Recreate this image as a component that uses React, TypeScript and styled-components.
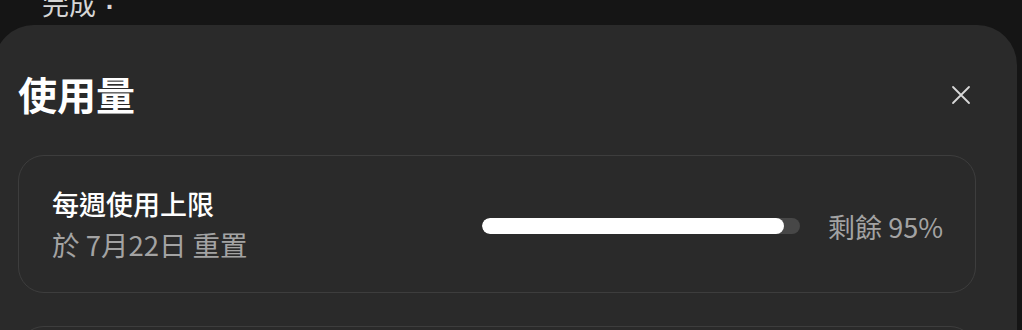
import React from "react";
import styled, { createGlobalStyle } from "styled-components";

const Global = createGlobalStyle`
  html, body { margin: 0; padding: 0; background: #151515; }
  body { font-family: "Noto Sans CJK TC", "Noto Sans", sans-serif; overflow: hidden; }
`;

const Page = styled.div`
  width: 1022px;
  height: 330px;
  overflow: hidden;
  background: #151515;
`;

const TopStrip = styled.div`
  height: 25px;
  overflow: hidden;
  padding-left: 42px;
`;

const TopText = styled.div`
  font-size: 27px;
  line-height: 27px;
  margin-top: -10px;
  color: #d6d6d6;
`;

const Stop = styled.span`
  display: inline-block;
  width: 27px;
  text-align: center;
  font-family: "Liberation Sans", sans-serif;
  font-weight: 700;
  transform: translateY(-6px);
`;

const Panel = styled.div`
  margin-left: -6px;
  width: 1023px;
  height: 320px;
  box-sizing: border-box;
  background: #2a2a2a;
  border-radius: 40px 40px 0 0;
  padding: 40px 46px 0 24px;
`;

const Header = styled.div`
  display: flex;
  align-items: center;
  justify-content: space-between;
  height: 60px;
`;

const Title = styled.h1`
  margin: 0;
  font-size: 39px;
  font-weight: 700;
  color: #ffffff;
  line-height: 60px;
  margin-top: -4px;
`;

const Close = styled.button`
  border: 0;
  background: transparent;
  padding: 0;
  width: 20px;
  height: 20px;
  display: flex;
  color: #d8d8d8;
`;

const Card = styled.div<{ $peek?: boolean }>`
  margin-top: ${(p) => (p.$peek ? "33px" : "30px")};
  width: 958px;
  height: 138px;
  box-sizing: border-box;
  border: 1.5px solid #3d3d3d;
  border-radius: 26px;
  display: flex;
  align-items: center;
  padding: 0 32px 0 33px;
`;

const Info = styled.div`
  flex: 1;
  display: flex;
  flex-direction: column;
  gap: 2px;
`;

const Label = styled.div`
  font-size: 27px;
  font-weight: 500;
  color: #ffffff;
  line-height: 38px;
`;

const Sub = styled.div`
  font-size: 27.5px;
  color: #a3a3a3;
  line-height: 38px;
`;

const Track = styled.div`
  width: 318px;
  height: 16px;
  border-radius: 8px;
  background: #474747;
  overflow: hidden;
  margin-right: 28px;
  margin-top: 4px;
`;

const Fill = styled.div`
  height: 100%;
  background: #ffffff;
  border-radius: 8px;
`;

const Remain = styled.div`
  font-size: 27px;
  color: #a3a3a3;
  white-space: nowrap;
  margin-top: 4px;
`;

export default function App() {
  const pct = 95;
  return (
    <Page lang="zh-Hant-TW">
      <Global />
      <TopStrip>
        <TopText>
          完成<Stop>.</Stop>
        </TopText>
      </TopStrip>
      <Panel>
        <Header>
          <Title>使用量</Title>
          <Close aria-label="關閉">
            <svg width="20" height="20" viewBox="0 0 20 20" fill="none" stroke="currentColor" strokeWidth="1.8" strokeLinecap="round">
              <path d="M2 2 L18 18 M18 2 L2 18" />
            </svg>
          </Close>
        </Header>
        <Card>
          <Info>
            <Label>每週使用上限</Label>
            <Sub>於 7月22日 重置</Sub>
          </Info>
          <Track>
            <Fill style={{ width: `${pct}%` }} />
          </Track>
          <Remain>剩餘 {pct}%</Remain>
        </Card>
        <Card $peek />
      </Panel>
    </Page>
  );
}
